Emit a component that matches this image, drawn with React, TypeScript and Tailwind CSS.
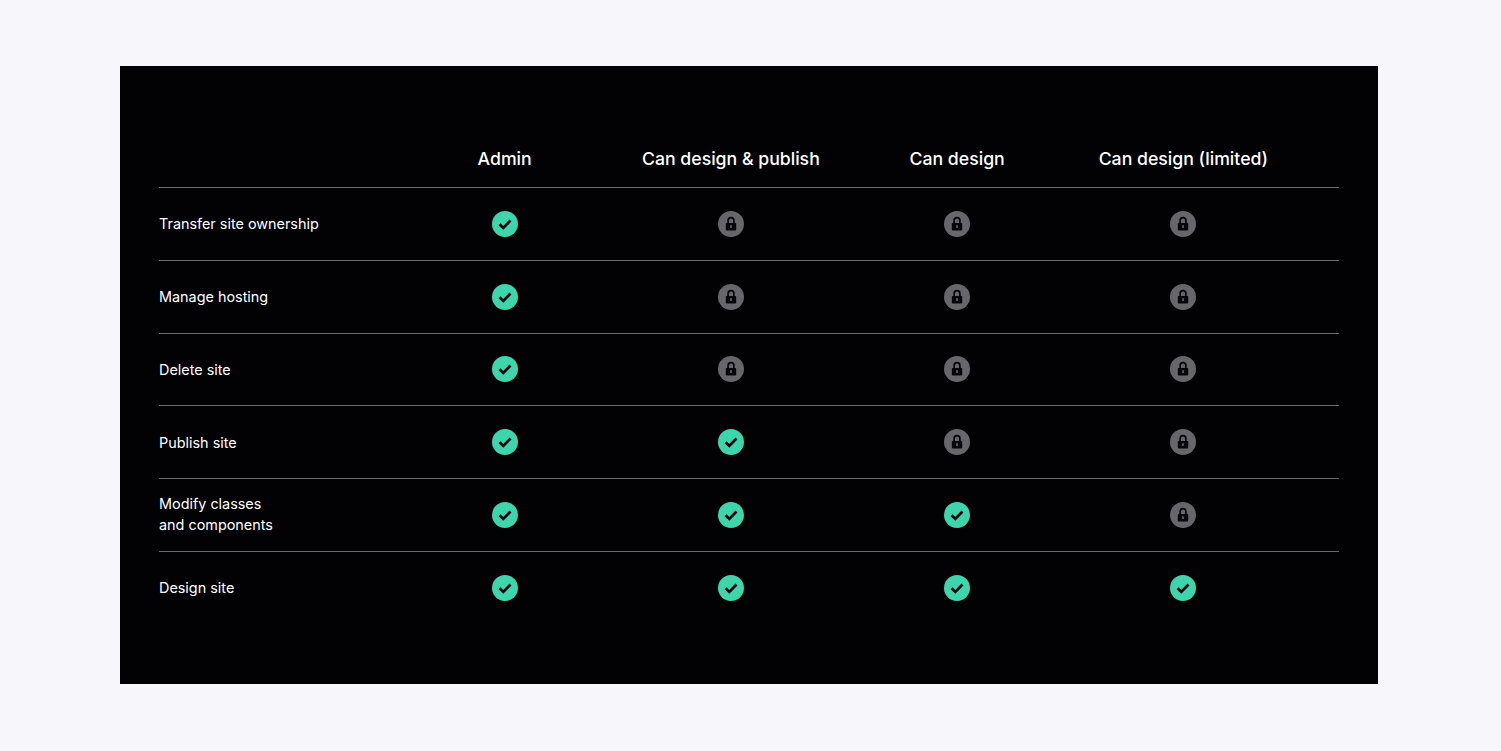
const COLS = ["Admin", "Can design & publish", "Can design", "Can design (limited)"];

const ROWS: { label: string[]; allowed: number }[] = [
  { label: ["Transfer site ownership"], allowed: 1 },
  { label: ["Manage hosting"], allowed: 1 },
  { label: ["Delete site"], allowed: 1 },
  { label: ["Publish site"], allowed: 2 },
  { label: ["Modify classes", "and components"], allowed: 3 },
  { label: ["Design site"], allowed: 4 },
];

function CheckIcon() {
  return (
    <svg width="26" height="26" viewBox="0 0 26 26">
      <circle cx="13" cy="13" r="13" fill="#3ED5AC" />
      <path d="M7.6 13.3l3.7 3.6 7.2-7.4" fill="none" stroke="#05050a" strokeWidth="2.7" />
    </svg>
  );
}

function LockIcon() {
  return (
    <svg width="26" height="26" viewBox="0 0 26 26">
      <circle cx="13" cy="13" r="13" fill="#67666b" />
      <path d="M10.1 12.5v-2.9a2.9 2.9 0 0 1 5.8 0v2.9" fill="none" stroke="#05050a" strokeWidth="1.7" />
      <rect x="7.8" y="12" width="10.4" height="7.4" rx="0.8" fill="#05050a" />
      <rect x="12.2" y="14.2" width="1.6" height="2.8" fill="#67666b" />
    </svg>
  );
}

export default function App() {
  return (
    <div className="h-[751px] bg-[#f7f7fb] px-[120px] pt-[66px] font-['Inter',sans-serif]">
      <div className="h-[618px] w-[1258px] bg-[#020104] px-[39px] pt-[55px] text-white">
        <div className="grid h-[67px] grid-cols-[232.5px_repeat(4,226.25px)] items-center border-b border-[#6b6b6f] pt-[10px] text-[17.7px] font-[450]">
          <div />
          {COLS.map((c) => (
            <div key={c} className="text-center">{c}</div>
          ))}
        </div>
        {ROWS.map((row, i) => (
          <div
            key={i}
            className={`grid h-[72.8px] grid-cols-[232.5px_repeat(4,226.25px)] items-center text-[14.4px] leading-[21px] ${
              i < ROWS.length - 1 ? "border-b border-[#6b6b6f]" : ""
            }`}
          >
            <div className={i >= 4 ? "pb-[2px]" : ""}>
              {row.label.map((l) => (
                <div key={l}>{l}</div>
              ))}
            </div>
            {COLS.map((c, j) => (
              <div key={c} className="flex justify-center">
                {j < row.allowed ? <CheckIcon /> : <LockIcon />}
              </div>
            ))}
          </div>
        ))}
      </div>
    </div>
  );
}
